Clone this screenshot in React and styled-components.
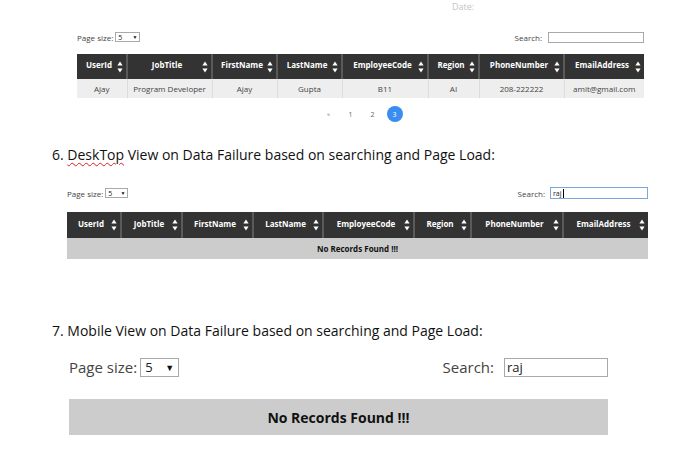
import React from "react";
import styled, { createGlobalStyle } from "styled-components";

const Global = createGlobalStyle`
  html, body { margin: 0; padding: 0; background: #fff; }
  body { font-family: "Open Sans", "Noto Sans", sans-serif; color: #222; }
`;

const Page = styled.div`
  width: 674px;
  height: 450px;
  overflow: hidden;
  display: flex;
  flex-direction: column;
`;

const DateLabel = styled.div`
  margin-left: 452px;
  padding-top: 1px;
  font-size: 9px;
  line-height: 11px;
  color: #c4c4c4;
`;

const Grid = styled.div`
  margin-left: ${(p) => p.$left}px;
  margin-top: ${(p) => p.$top}px;
  width: ${(p) => p.$width}px;
  display: flex;
  flex-direction: column;
`;

const Toolbar = styled.div`
  display: flex;
  justify-content: space-between;
  align-items: center;
  height: ${(p) => p.$h}px;
  font-size: ${(p) => p.$fs}px;
  color: #444;
`;

const Field = styled.div`
  display: flex;
  align-items: center;
  gap: ${(p) => p.$gap}px;
`;

const Select = styled.div`
  display: flex;
  align-items: center;
  justify-content: space-between;
  box-sizing: border-box;
  width: ${(p) => p.$w}px;
  height: ${(p) => p.$h}px;
  border: 1px solid #a9a9a9;
  padding: 0 ${(p) => p.$pad}px;
  font-size: ${(p) => p.$fs}px;
  color: #222;
  background: #fff;
`;

const Caret = styled.span`
  font-size: ${(p) => p.$fs}px;
  color: #111;
`;

const SearchBox = styled.div`
  box-sizing: border-box;
  width: ${(p) => p.$w}px;
  height: ${(p) => p.$h}px;
  border: 1px solid ${(p) => (p.$focus ? "#7aa7de" : "#a9a9a9")};
  font-size: ${(p) => p.$fs}px;
  padding-left: 2px;
  display: flex;
  align-items: center;
  color: #222;
`;

const Cursor = styled.span`
  display: inline-block;
  width: 1px;
  height: 9px;
  background: #000;
  margin-left: 1px;
`;

const Table = styled.table`
  border-collapse: collapse;
  table-layout: fixed;
  width: 100%;
  margin-top: ${(p) => p.$top}px;
`;

const Th = styled.th`
  background: #333;
  color: #fff;
  height: ${(p) => p.$h}px;
  padding: 0 3px 0 4px;
  border-left: 2px solid #5a5a5a;
  font-size: 8px;
  font-weight: 700;
  vertical-align: middle;
  &:first-child { border-left: none; }
`;

const ThInner = styled.div`
  display: flex;
  align-items: center;
`;

const ThText = styled.span`
  flex: 1;
  text-align: center;
  white-space: nowrap;
  margin-top: -4px;
`;

const Td = styled.td`
  background: #eee;
  height: 19px;
  padding: 0;
  text-align: center;
  font-size: 8px;
  color: #444;
  border-left: 1px solid #dcdcdc;
  white-space: nowrap;
  &:first-child { border-left: none; }
`;

const EmptyTd = styled.td`
  background: #ccc;
  height: 19px;
  text-align: center;
  font-size: 8px;
  font-weight: 700;
  color: #111;
`;

const Pager = styled.div`
  display: flex;
  justify-content: center;
  align-items: center;
  gap: 6px;
  margin-top: 8px;
  height: 16px;
  padding-left: 2px;
`;

const PageLink = styled.span`
  width: 16px;
  height: 16px;
  border-radius: 50%;
  display: flex;
  align-items: center;
  justify-content: center;
  font-size: ${(p) => (p.$small ? 6 : 7)}px;
  color: ${(p) => (p.$active ? "#fff" : "#666")};
  background: ${(p) => (p.$active ? "#3b8cf0" : "transparent")};
`;

const Heading = styled.div`
  margin-left: 52px;
  margin-top: ${(p) => p.$top}px;
  font-size: 14px;
  line-height: 20px;
  color: #111;
  white-space: nowrap;
`;

const Misspelled = styled.span`
  text-decoration: underline wavy #e02020;
  text-decoration-thickness: 1px;
  text-underline-offset: 2px;
`;

const MobileBox = styled.div`
  margin-top: 22px;
  height: 36px;
  background: #ccc;
  display: flex;
  align-items: center;
  justify-content: center;
  font-size: 14px;
  font-weight: 700;
  color: #111;
`;

const SortIcon = () => (
  <svg width="6" height="12" viewBox="0 0 6 12" style={{ flex: "none" }}>
    <polygon points="3,0.5 5.6,4.5 0.4,4.5" fill="#fff" />
    <polygon points="0.4,7.5 5.6,7.5 3,11.5" fill="#fff" />
  </svg>
);

const columns = [
  "UserId",
  "JobTitle",
  "FirstName",
  "LastName",
  "EmployeeCode",
  "Region",
  "PhoneNumber",
  "EmailAddress",
];

const Head = ({ widths, h }) => (
  <>
    <colgroup>
      {widths.map((w, i) => (
        <col key={i} style={{ width: w }} />
      ))}
    </colgroup>
    <thead>
      <tr>
        {columns.map((c) => (
          <Th key={c} $h={h}>
            <ThInner>
              <ThText>{c}</ThText>
              <SortIcon />
            </ThInner>
          </Th>
        ))}
      </tr>
    </thead>
  </>
);

const row = ["Ajay", "Program Developer", "Ajay", "Gupta", "B11", "AI", "208-222222", "amit@gmail.com"];

export default function App() {
  return (
    <Page>
      <Global />
      <DateLabel>Date:</DateLabel>

      <Grid $left={77} $top={19} $width={567}>
        <Toolbar $h={12} $fs={8}>
          <Field $gap={2}>
            Page size:
            <Select $w={25} $h={10} $pad={2} $fs={7}>
              5<Caret $fs={5}>▼</Caret>
            </Select>
          </Field>
          <Field $gap={6}>
            Search:
            <SearchBox $w={96} $h={11} $fs={7} />
          </Field>
        </Toolbar>
        <Table $top={11}>
          <Head widths={[50, 85, 65, 65, 86, 51, 85, 80]} h={25} />
          <tbody>
            <tr>
              {row.map((v, i) => (
                <Td key={i}>{v}</Td>
              ))}
            </tr>
          </tbody>
        </Table>
        <Pager>
          <PageLink $small>«</PageLink>
          <PageLink>1</PageLink>
          <PageLink>2</PageLink>
          <PageLink $active>3</PageLink>
        </Pager>
      </Grid>

      <Heading $top={23}>
        6. <Misspelled>DeskTop</Misspelled> View on Data Failure based on searching and Page Load:
      </Heading>

      <Grid $left={67} $top={22} $width={581}>
        <Toolbar $h={12} $fs={8}>
          <Field $gap={2}>
            Page size:
            <Select $w={23} $h={10} $pad={2} $fs={7}>
              5<Caret $fs={5}>▼</Caret>
            </Select>
          </Field>
          <Field $gap={5}>
            Search:
            <SearchBox $w={98} $h={12} $fs={7} $focus>
              raj<Cursor />
            </SearchBox>
          </Field>
        </Toolbar>
        <Table $top={13}>
          <Head widths={[54, 61, 71, 70, 91, 57, 92, 85]} h={26} />
          <tbody>
            <tr>
              <EmptyTd colSpan={8}>No Records Found !!!</EmptyTd>
            </tr>
          </tbody>
        </Table>
      </Grid>

      <Heading $top={62}>7. Mobile View on Data Failure based on searching and Page Load:</Heading>

      <Grid $left={69} $top={16} $width={539}>
        <Toolbar $h={20} $fs={15}>
          <Field $gap={3}>
            Page size:
            <Select $w={39} $h={19} $pad={4} $fs={13}>
              5<Caret $fs={9}>▼</Caret>
            </Select>
          </Field>
          <Field $gap={10}>
            Search:
            <SearchBox $w={104} $h={19} $fs={13}>
              raj
            </SearchBox>
          </Field>
        </Toolbar>
        <MobileBox>No Records Found !!!</MobileBox>
      </Grid>
    </Page>
  );
}
